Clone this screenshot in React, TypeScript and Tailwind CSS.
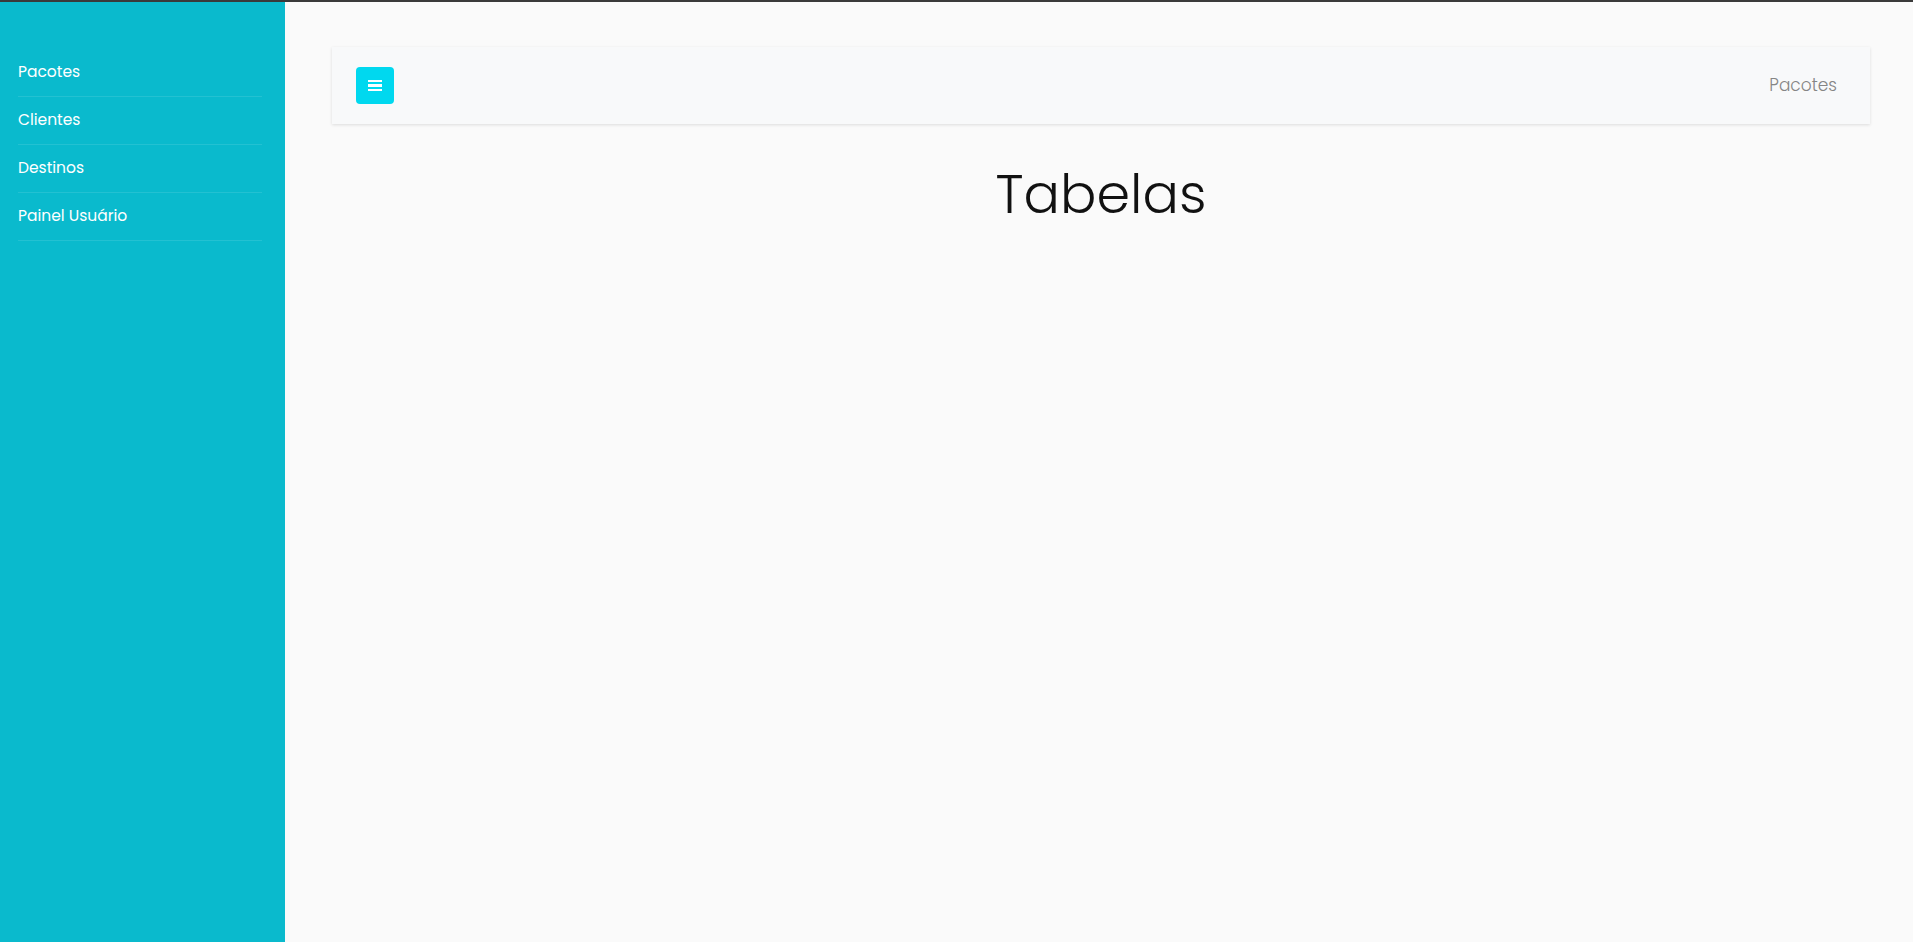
import React from 'react';

const menuItems = ['Pacotes', 'Clientes', 'Destinos', 'Painel Usuário'];

const Sidebar: React.FC = () => (
  <aside className="w-[285px] shrink-0 bg-[#0abacd] pt-[47px] pl-[18px] pr-[23px]">
    <ul>
      {menuItems.map((item) => (
        <li key={item} className="h-[48px] flex items-center border-b border-white/10">
          <a href="#" className="text-white text-[15.5px] leading-none -mt-[2px]">
            {item}
          </a>
        </li>
      ))}
    </ul>
  </aside>
);

const TopBar: React.FC = () => (
  <nav className="flex items-center justify-between h-[77px] bg-[#f8f9fa] pl-[24px] pr-[33px] shadow-[0_1px_3px_rgba(0,0,0,0.12)]">
    <button className="w-[38px] h-[37px] rounded-[4px] bg-[#00d8ef] flex flex-col items-center justify-center gap-[2px]">
      <span className="block w-[14px] h-[2.5px] bg-white" />
      <span className="block w-[14px] h-[2.5px] bg-white" />
      <span className="block w-[14px] h-[2.5px] bg-white" />
    </button>
    <span className="text-[17px] text-[#858585] font-light">Pacotes</span>
  </nav>
);

export default function App() {
  return (
    <div
      className="flex h-[942px] w-full border-t-2 border-[#3a3a3a] bg-[#fafafa]"
      style={{ fontFamily: 'Poppins, Inter, "Noto Sans", sans-serif' }}
    >
      <Sidebar />
      <main className="flex-1 pt-[45px] pl-[47px] pr-[43px]">
        <TopBar />
        <h1 className="mt-[38px] text-center text-[54px] leading-[1.2] font-light text-[#111]">
          Tabelas
        </h1>
      </main>
    </div>
  );
}
